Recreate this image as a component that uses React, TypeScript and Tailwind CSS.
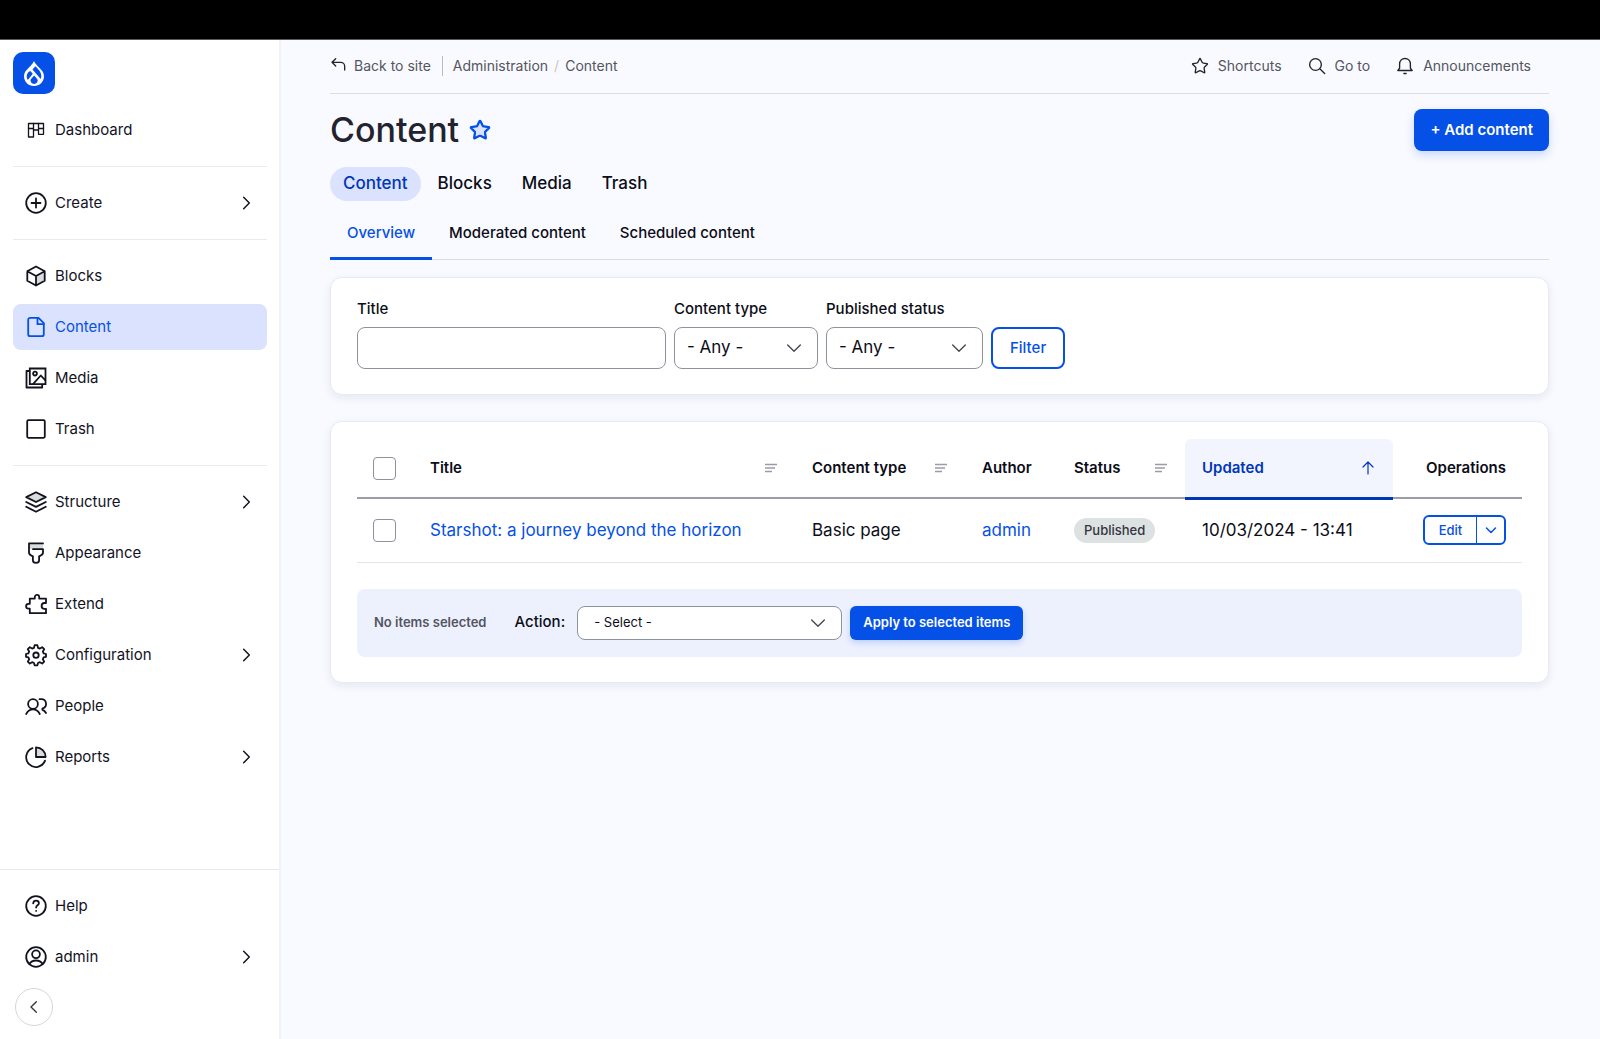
import type { ReactNode } from 'react';
import { Star } from 'lucide-react';

type MenuItem = { label: string; icon: ReactNode; hasChildren?: boolean; active?: boolean };

function Icon({ children, className = 'size-6' }: { children: ReactNode; className?: string }) {
  return (
    <svg
      viewBox="0 0 24 24"
      fill="none"
      stroke="currentColor"
      strokeWidth="1.8"
      strokeLinecap="round"
      strokeLinejoin="round"
      aria-hidden="true"
      className={className}
    >
      {children}
    </svg>
  );
}

const dashboardIcon = (
  <Icon>
    <g strokeWidth="1.3">
      <path d="M4.5 5.5h15v10.8h-5V12h-5v7h-5z" />
      <path d="M9.5 5.5V12M14.5 5.5V12M4.5 10.5h5M14.5 10.5h5" />
    </g>
  </Icon>
);

const createIcon = (
  <Icon>
    <circle cx="12" cy="12" r="9.8" />
    <path d="M12 7.5v9M7.5 12h9" />
  </Icon>
);

const blocksIcon = (
  <Icon>
    <path d="M12 12l8.7-4.7v9.4L12 21.5z" fill="#d8dcdc" stroke="none" />
    <path d="M12 2.5l8.7 4.8v9.4L12 21.5l-8.7-4.8V7.3zM3.3 7.3L12 12l8.7-4.7M12 12v9.5" />
  </Icon>
);

const contentIcon = (
  <Icon>
    <path d="M14.5 2.8H6.2a2 2 0 0 0-2 2v14.4a2 2 0 0 0 2 2h11.6a2 2 0 0 0 2-2V8.2z" />
    <path d="M13.5 2.8v6.4h6.3" />
  </Icon>
);

const mediaIcon = (
  <Icon>
    <path d="M5.8 2.5h15.7v15.7H5.8z" strokeLinejoin="miter" />
    <path d="M5 5H2.5v16.5h15.7v-2.8" />
    <circle cx="11" cy="7.6" r="1.9" />
    <path d="M9.2 17.8l7.6-8.3 4.4 4.6" />
  </Icon>
);

const trashIcon = (
  <Icon>
    <rect x="3.2" y="3.2" width="17.6" height="17.6" rx="1.2" />
  </Icon>
);

const structureIcon = (
  <Icon>
    <path d="M12 2.2l9.8 4.9L12 12 2.2 7.1z" fill="#d8dcdc" />
    <path d="M2.2 12l9.8 4.9 9.8-4.9M2.2 16.8l9.8 4.9 9.8-4.9" />
  </Icon>
);

const appearanceIcon = (
  <Icon>
    <path d="M5 2.4h14v5.7H5z" fill="#d8dcdc" stroke="none" />
    <path d="M19 2.4H5v9.2c0 1.8 1.2 2.6 2.8 3.2l1.1.6v3.9c0 1.4.9 2.6 3.1 2.6s3.1-1.2 3.1-2.6v-3.9l1.1-.6c1.6-.6 2.8-1.400 2.8-3.200V8.2H9" />
  </Icon>
);

const extendIcon = (
  <Icon>
    <path d="M5.8 21.2v-4.6h-1.3a2.4 2.4 0 0 1 0-4.8h1.3V6.600h5v-1.500a2.200 2.200 0 0 1 4.400 0v1.500h6.800v4.400h-1.500a2.900 2.900 0 0 0 0 5.800h1.500v4.400z" />
  </Icon>
);

const configurationIcon = (
  <Icon>
    <path d="M10.6 2.2h2.8l.6 2.6 1.9.8 2.3-1.4 2 2-1.4 2.3.8 1.9 2.4.6v2.8l-2.4.6-.8 1.9 1.4 2.3-2 2-2.3-1.4-1.9.8-.6 2.4h-2.8l-.6-2.4-1.9-.8-2.3 1.4-2-2 1.4-2.3-.8-1.9-2.4-.6V11l2.4-.6.8-1.9-1.4-2.3 2-2 2.3 1.4 1.9-.8z" />
    <circle cx="12" cy="12.2" r="2.7" />
  </Icon>
);

const peopleIcon = (
  <Icon>
    <circle cx="9" cy="10" r="4.9" />
    <path d="M2.2 20c1.6-3 4-4.6 6.8-4.6s5.2 1.6 6.8 4.6" />
    <path d="M15.5 5.2h2a4.7 4.7 0 0 1 1.5 9.1l-.6.5v1c1.8.6 2.8 1.7 3.6 3.2" />
  </Icon>
);

const reportsIcon = (
  <Icon>
    <path d="M12 2.4A9.6 9.6 0 0 1 21.6 12H12z" fill="#d8dcdc" />
    <path d="M8.5 3.2a9.7 9.7 0 1 0 12.5 12.4" />
  </Icon>
);

const helpIcon = (
  <Icon>
    <circle cx="12" cy="12" r="9.8" />
    <path d="M9.2 9.3c.2-1.7 1.3-2.6 2.9-2.6s2.8 1 2.8 2.5c0 2-2.8 2.2-2.8 4.3M12.1 16.8v.1" />
  </Icon>
);

const userIcon = (
  <Icon>
    <circle cx="12" cy="12" r="9.8" />
    <circle cx="12" cy="9.3" r="3.9" />
    <path d="M5.3 18.9c1.5-2.3 3.9-3.4 6.7-3.4s5.2 1.1 6.7 3.4" />
  </Icon>
);

const menuGroups: MenuItem[][] = [
  [{ label: 'Dashboard', icon: dashboardIcon }],
  [{ label: 'Create', icon: createIcon, hasChildren: true }],
  [
    { label: 'Blocks', icon: blocksIcon },
    { label: 'Content', icon: contentIcon, active: true },
    { label: 'Media', icon: mediaIcon },
    { label: 'Trash', icon: trashIcon },
  ],
  [
    { label: 'Structure', icon: structureIcon, hasChildren: true },
    { label: 'Appearance', icon: appearanceIcon },
    { label: 'Extend', icon: extendIcon },
    { label: 'Configuration', icon: configurationIcon, hasChildren: true },
    { label: 'People', icon: peopleIcon },
    { label: 'Reports', icon: reportsIcon, hasChildren: true },
  ],
];

const footerItems: MenuItem[] = [
  { label: 'Help', icon: helpIcon },
  { label: 'admin', icon: userIcon, hasChildren: true },
];

const columns = [
  { label: 'Title', width: '', sortable: true },
  { label: 'Content type', width: 'w-[170px]', sortable: true },
  { label: 'Author', width: 'w-[92px]' },
  { label: 'Status', width: 'w-[128px]', sortable: true },
];

function MenuLink({ item }: { item: MenuItem }) {
  return (
    <a
      href="#"
      className={`flex h-[46px] items-center gap-[7px] rounded-lg pl-[11px] pr-3 text-[15px] ${item.active ? 'bg-[#dbe2fd] text-[#0550e6]' : 'text-[#12131f]'}`}
    >
      {item.icon}
      <span className="flex-1">{item.label}</span>
      {item.hasChildren && (
        <Icon className="size-4">
          <path d="M7 3.5L15.5 12 7 20.5" strokeWidth="2.2" />
        </Icon>
      )}
    </a>
  );
}

function Logo() {
  return (
    <a
      href="#"
      aria-label="Home"
      className="flex size-[42px] items-center justify-center rounded-[10px] bg-[#0550e6]"
    >
      <svg viewBox="0 0 20 25" className="h-[25px] w-5" aria-hidden="true">
        <path
          d="M10 0c1.2 2.8 3.2 4.6 5.3 6.7C17.9 9.2 20 11.6 20 15.2 20 20.7 15.6 25 10 25S0 20.7 0 15.2c0-3.6 2.1-6 4.7-8.5C6.8 4.6 8.8 2.8 10 0z"
          fill="#fff"
        />
        <path
          d="M11.3 5.2c2.8 2.8 5.900 5.300 6 9.900 0 1.100-.2 2.100-.6 3L8.500 8.400zM6.600 10.300l2.200 2.500-5 6.200c-1.400-2.100-1.500-4.900-.1-6.900.9-1.200 1.800-1.900 2.900-1.800z"
          fill="#0550e6"
        />
        <path d="M10.2 14.4l3.2 3.9c.9 2.300-.9 4.700-3.300 4.700s-4.200-2.400-3.300-4.700z" fill="#0550e6" />
      </svg>
    </a>
  );
}

function Sidebar() {
  return (
    <aside className="flex w-[281px] shrink-0 flex-col border-r-2 border-[#f1f2f8] bg-white">
      <div className="pl-[13px] pr-3 pt-3">
        <Logo />
        <nav aria-label="Administration" className="divide-y divide-[#e9eaf2]">
          {menuGroups.map((group) => (
            <ul key={group[0].label} className="flex flex-col gap-[5px] py-[13px]">
              {group.map((item) => (
                <li key={item.label}>
                  <MenuLink item={item} />
                </li>
              ))}
            </ul>
          ))}
        </nav>
      </div>
      <div className="mt-auto border-t border-[#e6e7f0] pb-[13px] pl-[13px] pr-3 pt-[13px]">
        <ul className="flex flex-col gap-[5px]">
          {footerItems.map((item) => (
            <li key={item.label}>
              <MenuLink item={item} />
            </li>
          ))}
        </ul>
        <button
          type="button"
          aria-label="Collapse sidebar"
          className="ml-0.5 mt-2 flex size-[38px] items-center justify-center rounded-full border border-[#d3d8da] text-[#33343f]"
        >
          <Icon className="size-4">
            <path d="M15.5 4l-8 8 8 8" strokeWidth="2" />
          </Icon>
        </button>
      </div>
    </aside>
  );
}

function TopBar() {
  return (
    <div className="flex h-[54px] items-center justify-between border-b border-[#dcdde3] pb-0.5 pr-[18px] text-sm text-[#545560]">
      <nav aria-label="Breadcrumb" className="flex items-center">
        <a href="#" className="flex items-center gap-2 pr-[11px]">
          <Icon className="size-4 text-[#22232e]">
            <path d="M8.5 1L3 6.5 8.5 12M3 6.5h13a6 6 0 0 1 6 6V18" strokeWidth="2" />
          </Icon>
          Back to site
        </a>
        <ol className="flex items-center gap-1.5 border-l border-[#b9bac2] pl-2.5">
          <li>
            <a href="#">Administration</a>
          </li>
          <li aria-hidden="true" className="text-[#c6c7ce]">
            /
          </li>
          <li>Content</li>
        </ol>
      </nav>
      <div className="flex gap-[26px]">
        <button type="button" className="flex items-center gap-[9px]">
          <Star className="size-[18px] text-[#22232e]" strokeWidth={1.8} />
          Shortcuts
        </button>
        <button type="button" className="flex items-center gap-[9px]">
          <Icon className="size-[18px] text-[#22232e]">
            <circle cx="10" cy="10" r="7.8" />
            <path d="M15.7 15.7l6.5 6.3" />
          </Icon>
          Go to
        </button>
        <button type="button" className="flex items-center gap-[9px]">
          <Icon className="size-[18px] text-[#22232e]">
            <path d="M2.5 18h19l-2.3-3V9.5C19.2 5 16 2 12 2S4.8 5 4.8 9.5V15zM10.5 22h3" />
          </Icon>
          Announcements
        </button>
      </div>
    </div>
  );
}

function Chevron() {
  return (
    <Icon className="pointer-events-none absolute right-4 size-4 text-[#44454f]">
      <path d="M2.5 7.5L12 17l9.5-9.5" strokeWidth="2" />
    </Icon>
  );
}

function FilterSelect({ id, label, width }: { id: string; label: string; width: string }) {
  return (
    <div className="flex flex-col gap-2">
      <label htmlFor={id} className="text-[15px] leading-5 font-medium">
        {label}
      </label>
      <div className={`relative flex items-center ${width}`}>
        <select
          id={id}
          className="h-[42px] w-full appearance-none rounded-lg border border-[#8e929c] bg-white pl-3 text-[17px]"
        >
          <option>- Any -</option>
        </select>
        <Chevron />
      </div>
    </div>
  );
}

function Filters() {
  return (
    <form className="mt-[17px] flex items-end gap-2 rounded-xl border border-[#e9eaf1] bg-white px-[26px] pb-[25px] pt-[21px] shadow-[0_3px_8px_rgba(20,20,60,0.08)]">
      <div className="flex flex-col gap-2">
        <label htmlFor="title" className="text-[15px] leading-5 font-medium">
          Title
        </label>
        <input
          id="title"
          type="text"
          className="h-[42px] w-[309px] rounded-lg border border-[#8e929c] bg-white px-3 text-[17px]"
        />
      </div>
      <FilterSelect id="content-type" label="Content type" width="w-[144px]" />
      <FilterSelect id="status" label="Published status" width="w-[157px]" />
      <button
        type="button"
        className="h-[42px] rounded-lg border-2 border-[#0550e6] px-[17px] text-[15px] font-medium text-[#0550e6]"
      >
        Filter
      </button>
    </form>
  );
}

function SortIcon() {
  return (
    <svg viewBox="0 0 14 10" className="h-2.5 w-3.5" stroke="#9a9ca6" strokeWidth="1.3" aria-hidden="true">
      <path d="M1 1.5h12M1 5h10M1 8.5h7" />
    </svg>
  );
}

function Checkbox({ label }: { label: string }) {
  return (
    <input
      type="checkbox"
      aria-label={label}
      className="block size-[23px] appearance-none rounded border border-[#8e929c] bg-white"
    />
  );
}

function ContentTable() {
  return (
    <table className="w-full table-fixed border-collapse text-left">
      <thead>
        <tr className="h-[59px] border-b-2 border-[#9b9ea7] text-[15px]">
          <th scope="col" className="w-14 pl-4">
            <Checkbox label="Select all rows" />
          </th>
          {columns.map((col) => (
            <th key={col.label} scope="col" className={`px-[17px] font-semibold ${col.width}`}>
              {col.sortable ? (
                <a href="#" className="flex items-center justify-between">
                  {col.label}
                  <SortIcon />
                </a>
              ) : (
                col.label
              )}
            </th>
          ))}
          <th
            scope="col"
            aria-sort="ascending"
            className="w-[208px] rounded-t-md border-b-3 border-[#0036b8] bg-[#f2f5fe] px-[17px] font-semibold text-[#0036b8]"
          >
            <a href="#" className="flex items-center justify-between">
              Updated
              <Icon className="size-4">
                <path d="M12 21V3M4.5 10.5L12 3l7.5 7.5" />
              </Icon>
            </a>
          </th>
          <th scope="col" className="w-[129px] pr-4 text-right font-semibold">
            Operations
          </th>
        </tr>
      </thead>
      <tbody>
        <tr className="h-16 border-b border-[#e3e4ec] text-[17px]">
          <td className="pl-4">
            <Checkbox label="Select this item" />
          </td>
          <td className="px-[17px]">
            <a href="#" className="text-[#0550e6]">
              Starshot: a journey beyond the horizon
            </a>
          </td>
          <td className="px-[17px]">Basic page</td>
          <td className="px-[17px]">
            <a href="#" className="text-[#0550e6]">
              admin
            </a>
          </td>
          <td className="px-[17px]">
            <span className="flex h-[25px] w-fit items-center rounded-full bg-[#dce1e1] px-2.5 text-[13px] font-medium text-[#33343f]">
              Published
            </span>
          </td>
          <td className="px-[17px]">10/03/2024 - 13:41</td>
          <td className="pr-4">
            <div className="ml-auto flex h-[30px] w-[83px] divide-x divide-[#0550e6] rounded-md border-2 border-[#0550e6] text-[13px] font-medium text-[#0550e6]">
              <button type="button" className="flex-1">
                Edit
              </button>
              <button type="button" aria-label="List additional actions" className="flex w-[27px] items-center justify-center">
                <Icon className="size-3">
                  <path d="M3 8l9 9 9-9" strokeWidth="3" />
                </Icon>
              </button>
            </div>
          </td>
        </tr>
      </tbody>
    </table>
  );
}

function BulkActions() {
  return (
    <div className="mt-[26px] flex items-center rounded-lg bg-[#edf1fe] px-[17px] py-[17px] text-[13px]">
      <span className="font-semibold text-[#545560]">No items selected</span>
      <label htmlFor="action" className="ml-7 text-[15px] font-medium">
        Action:
      </label>
      <div className="relative ml-3 flex w-[265px] items-center">
        <select
          id="action"
          className="h-[34px] w-full appearance-none rounded-lg border border-[#8e929c] bg-white pl-4"
        >
          <option>- Select -</option>
        </select>
        <Chevron />
      </div>
      <button
        type="button"
        className="ml-2 h-[34px] rounded-md bg-[#0550e6] px-[13px] font-semibold text-white shadow-[0_3px_6px_rgba(5,80,230,0.2)]"
      >
        Apply to selected items
      </button>
    </div>
  );
}

export default function App() {
  return (
    <div className="flex min-h-screen flex-col bg-[#f9faff] font-['Inter',sans-serif] text-[#0c0d18]">
      <div className="h-10 border-b border-[#5a5a5c] bg-black" />
      <div className="flex flex-1">
        <Sidebar />
        <main className="min-w-0 flex-1 pl-[49px] pr-[51px]">
          <TopBar />
          <header className="flex items-center justify-between pt-[15px]">
            <h1 className="flex items-center gap-2.5 text-[34px] leading-[42px] font-medium text-[#22232e]">
              Content
              <Star className="size-[22px] fill-[#dbe2fd] text-[#0550e6]" strokeWidth={2.5} aria-label="Add to shortcuts" />
            </h1>
            <a
              href="#"
              className="flex h-[42px] items-center rounded-lg bg-[#0550e6] px-4 text-[15px] font-semibold text-white shadow-[0_4px_10px_rgba(5,80,230,0.2)]"
            >
              + Add content
            </a>
          </header>
          <nav aria-label="Primary tabs" className="mt-4 flex gap-1 text-[17px] font-medium">
            <a href="#" className="flex h-[34px] items-center rounded-full bg-[#dbe2fd] px-[13px] text-[#0036b8]">
              Content
            </a>
            {['Blocks', 'Media', 'Trash'].map((tab) => (
              <a key={tab} href="#" className="flex h-[34px] items-center px-[13px]">
                {tab}
              </a>
            ))}
          </nav>
          <nav aria-label="Secondary tabs" className="mt-[5px] flex border-b border-[#dcdde3] text-[15px] font-medium">
            <a href="#" className="-mb-px flex h-[54px] items-center border-b-3 border-[#0550e6] px-[17px] pt-1 text-[#0550e6]">
              Overview
            </a>
            {['Moderated content', 'Scheduled content'].map((tab) => (
              <a key={tab} href="#" className="-mb-px flex h-[54px] items-center border-b-3 border-transparent px-[17px] pt-1">
                {tab}
              </a>
            ))}
          </nav>
          <Filters />
          <section className="mt-[26px] rounded-xl border border-[#e9eaf1] bg-white px-[26px] pb-[25px] pt-[17px] shadow-[0_3px_8px_rgba(20,20,60,0.08)]">
            <ContentTable />
            <BulkActions />
          </section>
        </main>
      </div>
    </div>
  );
}
